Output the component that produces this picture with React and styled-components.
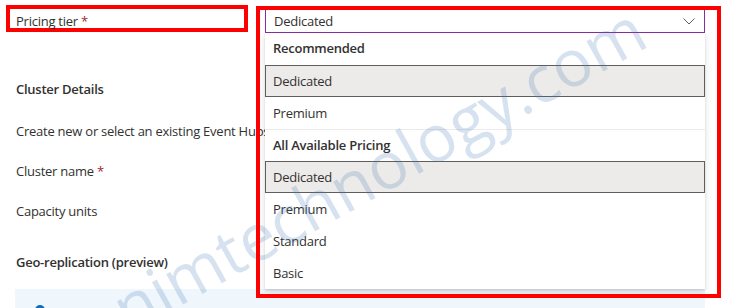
import styled, { createGlobalStyle } from "styled-components";

const GlobalStyle = createGlobalStyle`
  body {
    margin: 0;
    background: #ffffff;
    font-family: "Open Sans", "Noto Sans", sans-serif;
    color: #323130;
    letter-spacing: -0.25px;
  }
`;

const groups = [
  { title: "Recommended", options: ["Dedicated", "Premium"] },
  { title: "All Available Pricing", options: ["Dedicated", "Premium", "Standard", "Basic"] },
];

const App = () => {
  return (
    <>
      <GlobalStyle />
      <Page>
        <LeftColumn>
          <LabelBox>
            Pricing tier <Required>*</Required>
          </LabelBox>
          <SectionTitle $gap={47}>Cluster Details</SectionTitle>
          <FieldText $gap={22}>Create new or select an existing Event Hubs</FieldText>
          <FieldText $gap={20}>
            Cluster name <Required>*</Required>
          </FieldText>
          <FieldText $gap={20}>Capacity units</FieldText>
          <SectionTitle $gap={31}>Geo-replication (preview)</SectionTitle>
          <InfoBar>
            <InfoDot />
          </InfoBar>
        </LeftColumn>

        <SelectFrame>
          <SelectBox>
            <span>Dedicated</span>
            <svg width="12" height="7" viewBox="0 0 12 7">
              <polyline points="0.5,0.5 6,6 11.5,0.5" fill="none" stroke="#605e5c" strokeWidth="1" />
            </svg>
          </SelectBox>
          <Menu>
            {groups.map((g, gi) => (
              <div key={g.title}>
                <GroupHeader $divider={gi > 0}>{g.title}</GroupHeader>
                {g.options.map((o, i) => (
                  <Option key={o} $selected={i === 0}>
                    {o}
                  </Option>
                ))}
              </div>
            ))}
          </Menu>
        </SelectFrame>

        <Watermark>nimtechnology.com</Watermark>
      </Page>
    </>
  );
};

const Page = styled.div`
  position: relative;
  display: flex;
  align-items: flex-start;
  height: 308px;
  overflow: hidden;
  padding: 5px 0 0 6px;
  box-sizing: border-box;
`;

const LeftColumn = styled.div`
  width: 242px;
  flex-shrink: 0;
  font-size: 13px;
  white-space: nowrap;
`;

const LabelBox = styled.div`
  box-sizing: border-box;
  width: 242px;
  height: 27px;
  border: 4px solid #ff0000;
  padding: 3px 0 0 6px;
  line-height: 18px;
`;

const Required = styled.span`
  color: #a4262c;
`;

const SectionTitle = styled.div`
  margin-top: ${(p) => p.$gap}px;
  padding-left: 10px;
  line-height: 20px;
  font-weight: 600;
`;

const FieldText = styled.div`
  margin-top: ${(p) => p.$gap}px;
  padding-left: 10px;
  line-height: 20px;
`;

const InfoBar = styled.div`
  margin: 17px 0 0 9px;
  width: 690px;
  height: 40px;
  background: #eff6fc;
  padding: 16px 0 0 20px;
  box-sizing: border-box;
`;

const InfoDot = styled.div`
  width: 10px;
  height: 10px;
  border-radius: 50%;
  background: #0f6cbd;
`;

const SelectFrame = styled.div`
  position: relative;
  box-sizing: border-box;
  width: 465px;
  height: 292px;
  margin: 1px 0 0 8px;
  padding: 3px 0 0 9px;

  &::after {
    content: "";
    position: absolute;
    inset: 0;
    border: 4px solid #ff0000;
    z-index: 3;
    pointer-events: none;
  }
`;

const SelectBox = styled.div`
  position: relative;
  z-index: 1;
  box-sizing: border-box;
  width: 440px;
  height: 24px;
  border: 1px solid #8a2da5;
  background: #ffffff;
  display: flex;
  align-items: center;
  justify-content: space-between;
  padding: 0 9px 0 8px;
  font-size: 13px;

  svg {
    display: block;
  }
`;

const Menu = styled.div`
  position: relative;
  z-index: 1;
  width: 440px;
  background: #ffffff;
  box-shadow: 0 3.2px 7.2px rgba(0, 0, 0, 0.13), 0 0.6px 1.8px rgba(0, 0, 0, 0.11);
  font-size: 13px;
`;

const GroupHeader = styled.div`
  box-sizing: border-box;
  height: 32px;
  line-height: 31px;
  padding-left: 8px;
  font-weight: 600;
  border-top: ${(p) => (p.$divider ? "1px solid #edebe9" : "none")};
`;

const Option = styled.div`
  box-sizing: border-box;
  height: 32px;
  padding-left: ${(p) => (p.$selected ? 7 : 8)}px;
  background: ${(p) => (p.$selected ? "#edebe9" : "transparent")};
  border: ${(p) => (p.$selected ? "1px solid #605e5c" : "none")};
  line-height: ${(p) => (p.$selected ? 30 : 32)}px;
`;

const Watermark = styled.div`
  position: absolute;
  left: 378px;
  top: 168px;
  transform: translate(-50%, -50%) rotate(-29deg);
  font-family: "Open Sans", "Lato", sans-serif;
  font-weight: 400;
  font-size: 65px;
  letter-spacing: 0;
  color: rgba(60, 120, 180, 0.21);
  white-space: nowrap;
  pointer-events: none;
  z-index: 2;
`;

export default App;
